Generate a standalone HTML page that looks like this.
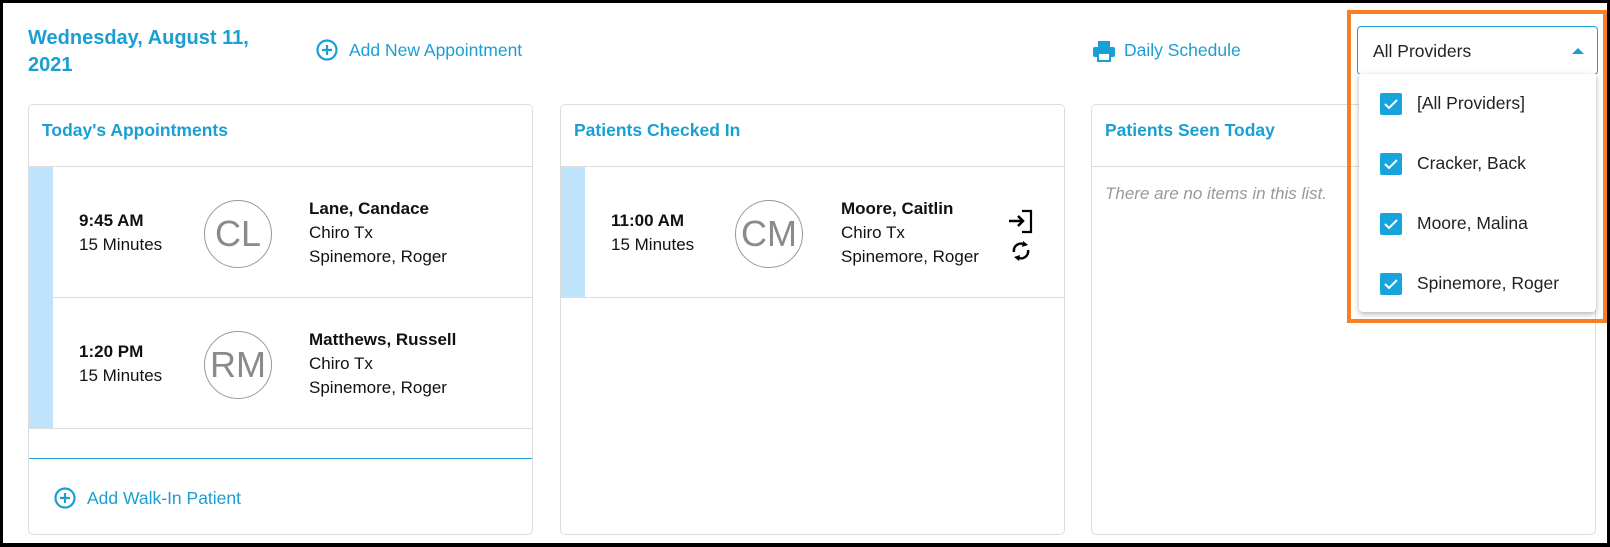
<!DOCTYPE html>
<html><head><style>
*{box-sizing:border-box;margin:0;padding:0}
body{width:1610px;height:547px;position:relative;background:#fff;font-family:"Liberation Sans",sans-serif;overflow:hidden}
.frame{position:absolute;left:0;top:0;width:1610px;height:547px;border:3px solid #000;border-bottom-width:4px}
.a{position:absolute;white-space:nowrap}
.blue{color:#1a9fd3}
.panel{position:absolute;top:104px;height:431px;border:1px solid #ddd;border-radius:5px}
.ph{position:absolute;left:0;right:0;top:0;height:62px;border-bottom:1px solid #ddd}
.ph span{position:absolute;left:13px;top:15px;font-weight:bold;font-size:17.5px;color:#1a9fd3}
.row{position:absolute;left:0;right:0;height:131px;border-bottom:1px solid #ddd}
.bar{position:absolute;left:0;top:0;bottom:0;width:24px;background:#bfe3fb}
.t{position:absolute;left:50px;top:42px;font-size:17px;line-height:24px;color:#111}
.av{position:absolute;top:33px;width:68px;height:68px;border:1px solid #999;border-radius:50%;color:#8a8a8a;font-size:36px;text-align:center;line-height:66px}
.n{position:absolute;top:30px;font-size:17px;line-height:24px;color:#111}
.chk{position:absolute;left:21px;width:22px;height:22px;background:#17a3dc;border-radius:2px}
.it{position:absolute;left:0;right:0;height:60px}
.it span{position:absolute;left:58px;top:19px;font-size:17.5px;color:#222}
</style></head><body>
<div class="frame"></div>
<div class="a blue" style="left:28px;top:25px;font-size:20px;font-weight:bold;line-height:27px">Wednesday, August 11,<br>2021</div>
<svg class="a" style="left:316px;top:39px" width="22" height="22" viewBox="0 0 22 22"><circle cx="11" cy="11" r="9.5" fill="none" stroke="#1a9fd3" stroke-width="2.2"/><path d="M11 6v10M6 11h10" stroke="#1a9fd3" stroke-width="2.2"/></svg>
<div class="a blue" style="left:349px;top:40px;font-size:17.5px">Add New Appointment</div>
<svg class="a" style="left:1092px;top:40px" width="24" height="22" viewBox="0 0 24 22"><rect x="6" y="1" width="12" height="6" fill="#1a9fd3"/><rect x="1" y="7" width="22" height="10" rx="2" fill="#1a9fd3"/><rect x="6" y="13" width="12" height="8" fill="#fff" stroke="#1a9fd3" stroke-width="2"/></svg>
<div class="a blue" style="left:1124px;top:40px;font-size:17.5px">Daily Schedule</div>

<div class="panel" style="left:28px;width:505px">
<div class="ph"><span>Today's Appointments</span></div>
<div class="row" style="top:62px"><div class="bar"></div><div class="t"><b>9:45 AM</b><br>15 Minutes</div><div class="av" style="left:175px">CL</div><div class="n" style="left:280px"><b>Lane, Candace</b><br>Chiro Tx<br>Spinemore, Roger</div></div>
<div class="row" style="top:193px"><div class="bar"></div><div class="t"><b>1:20 PM</b><br>15 Minutes</div><div class="av" style="left:175px">RM</div><div class="n" style="left:280px"><b>Matthews, Russell</b><br>Chiro Tx<br>Spinemore, Roger</div></div>
<div class="a" style="left:0;right:0;top:353px;border-top:1.5px solid #1a9fd3"></div>
<svg class="a" style="left:25px;top:382px" width="22" height="22" viewBox="0 0 22 22"><circle cx="11" cy="11" r="9.5" fill="none" stroke="#1a9fd3" stroke-width="2.2"/><path d="M11 6v10M6 11h10" stroke="#1a9fd3" stroke-width="2.2"/></svg>
<div class="a blue" style="left:58px;top:383px;font-size:17.5px">Add Walk-In Patient</div>
</div>

<div class="panel" style="left:560px;width:505px">
<div class="ph"><span>Patients Checked In</span></div>
<div class="row" style="top:62px"><div class="bar"></div><div class="t"><b>11:00 AM</b><br>15 Minutes</div><div class="av" style="left:174px">CM</div><div class="n" style="left:280px"><b>Moore, Caitlin</b><br>Chiro Tx<br>Spinemore, Roger</div>
<svg class="a" style="left:446px;top:42px" width="28" height="26" viewBox="0 0 28 26"><path d="M2 12h14M11 7l5 5-5 5" fill="none" stroke="#000" stroke-width="2.5"/><path d="M15 2h9v21h-9" fill="none" stroke="#000" stroke-width="2.2"/></svg>
<svg class="a" style="left:449px;top:72px" width="22" height="24" viewBox="0 0 22 24"><path d="M4 13a7 7 0 0 1 11-7" fill="none" stroke="#000" stroke-width="2.5"/><path d="M13 2l5 4-6 2z" fill="#000"/><path d="M18 11a7 7 0 0 1-11 7" fill="none" stroke="#000" stroke-width="2.5"/><path d="M9 22l-5-4 6-2z" fill="#000"/></svg>
</div>
</div>

<div class="panel" style="left:1091px;width:505px">
<div class="ph"><span>Patients Seen Today</span></div>
<div class="a" style="left:13px;top:79px;font-size:17px;font-style:italic;color:#999">There are no items in this list.</div>
</div>

<div class="a" style="left:1347px;top:10px;width:260px;height:313px;border:4px solid #f58025"></div>
<div class="a" style="left:1357px;top:26px;width:241px;height:49px;border:1.5px solid #1a9fd3;border-radius:4px;background:#fff">
<span class="a" style="left:15px;top:14px;font-size:17.5px;color:#222">All Providers</span>
<div class="a" style="right:13px;top:21px;width:0;height:0;border-left:6px solid transparent;border-right:6px solid transparent;border-bottom:6px solid #1a9fd3"></div>
</div>
<div class="a" style="left:1359px;top:74px;width:237px;height:238px;background:#fff;box-shadow:0 2px 6px rgba(0,0,0,.3);border-radius:0 0 4px 4px">
<div class="it" style="top:0"><div class="chk" style="top:19px"><svg width="22" height="22"><path d="M5 11l4 4 8-8" fill="none" stroke="#fff" stroke-width="2"/></svg></div><span>[All Providers]</span></div>
<div class="it" style="top:60px"><div class="chk" style="top:19px"><svg width="22" height="22"><path d="M5 11l4 4 8-8" fill="none" stroke="#fff" stroke-width="2"/></svg></div><span>Cracker, Back</span></div>
<div class="it" style="top:120px"><div class="chk" style="top:19px"><svg width="22" height="22"><path d="M5 11l4 4 8-8" fill="none" stroke="#fff" stroke-width="2"/></svg></div><span>Moore, Malina</span></div>
<div class="it" style="top:180px"><div class="chk" style="top:19px"><svg width="22" height="22"><path d="M5 11l4 4 8-8" fill="none" stroke="#fff" stroke-width="2"/></svg></div><span>Spinemore, Roger</span></div>
</div>
</body></html>
